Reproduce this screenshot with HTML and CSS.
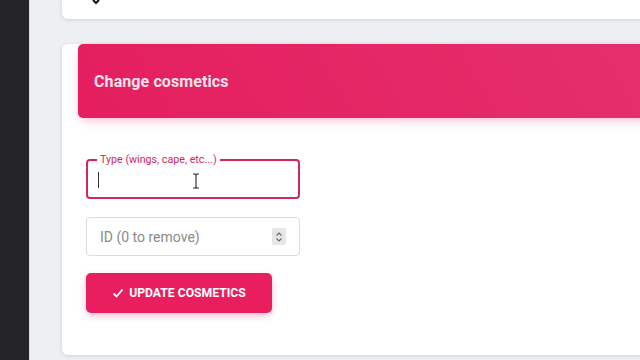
FILE: index.html
```html
<!DOCTYPE html>
<html lang="en">
<head>
  <meta charset="UTF-8">
  <title>Change cosmetics</title>
  <link rel="stylesheet" href="styles.css">
</head>
<body>
  <div class="layout">
    <aside class="sidebar"></aside>

    <main class="content">
      <div class="card card-top">
        <svg class="top-glyph" width="10" height="6" viewBox="0 0 10 6">
          <path d="M2 0 L5 3 L8 0" fill="none" stroke="#111" stroke-width="2"/>
        </svg>
      </div>

      <div class="card">
        <div class="card-header">
          <h4 class="card-title">Change cosmetics</h4>
        </div>

        <div class="card-body">
          <fieldset class="field field-active">
            <legend>Type (wings, cape, etc...)</legend>
            <div class="field-row">
              <span class="caret"></span>
              <svg class="ibeam" width="8" height="16" viewBox="0 0 8 16">
                <path d="M1 1 H3 Q4 1 4 2.5 V13.5 Q4 15 3 15 H1 M7 1 H5 Q4 1 4 2.5 M4 13.5 Q4 15 5 15 H7" fill="none" stroke="#222" stroke-width="1.1"/>
              </svg>
            </div>
          </fieldset>

          <div class="field field-number">
            <input type="text" placeholder="ID (0 to remove)">
            <span class="spinner">
              <svg width="8" height="12" viewBox="0 0 8 12">
                <path d="M1.5 4.5 L4 2 L6.5 4.5 M1.5 7.5 L4 10 L6.5 7.5" fill="none" stroke="#666" stroke-width="1.1"/>
              </svg>
            </span>
          </div>

          <button class="btn-update">
            <svg width="12" height="10" viewBox="0 0 12 10">
              <path d="M1.5 5.5 L4.5 8.5 L10.5 1.5" fill="none" stroke="#fff" stroke-width="1.8"/>
            </svg>
            UPDATE COSMETICS
          </button>
        </div>
      </div>
    </main>
  </div>
</body>
</html>
```

FILE: styles.css
```css
html, body { margin: 0; padding: 0; height: 100%; overflow: hidden; }
body { font-family: Roboto, "Noto Sans", Arial, sans-serif; background: #eeeff2; }

.layout { display: flex; height: 100%; }
.sidebar { width: 29px; flex: none; background: #252429; border-right: 1px solid #d9dadd; }

.content { flex: 1; padding-left: 32px; margin-right: -40px; }

.card { background: #fff; border-radius: 6px; box-shadow: 0 1px 4px rgba(0, 0, 0, 0.12); }
.card-top { height: 19px; border-radius: 0 0 6px 6px; margin-bottom: 51px; position: relative; }
.top-glyph { position: absolute; left: 29px; top: 0; }

.card-header {
  margin: -26px 0 0 16px;
  height: 74px;
  padding-left: 16px;
  display: flex;
  align-items: center;
  border-radius: 5px;
  background: linear-gradient(60deg, #e41e5f, #e5306d);
  box-shadow: 0 4px 12px -4px rgba(233, 30, 99, 0.45);
}
.card-title { margin: 0; font-size: 16px; font-weight: 700; color: #fbe3ec; letter-spacing: 0.1px; }

.card-body { padding: 42px 0 42px 24px; display: flex; flex-direction: column; align-items: flex-start; }

.field { width: 214px; box-sizing: border-box; border-radius: 4px; }
.field-active {
  margin: 0;
  padding: 0 10px;
  height: 44px;
  border: 2px solid #d3265f;
  margin-top: -5px;
}
.field-active legend {
  font-size: 10.7px;
  color: #d3265f;
  padding: 0 3px;
  margin-left: -1px;
  line-height: 10px;
}
.field-row { display: flex; align-items: center; height: 30px; position: relative; }
.caret { width: 1px; height: 16px; background: #333; }
.ibeam { position: absolute; left: 94px; top: 8px; }

.field-number {
  margin-top: 18px;
  height: 39px;
  border: 1px solid #dcdcdc;
  display: flex;
  align-items: center;
  padding: 0 13px 0 13px;
}
.field-number input {
  flex: 1;
  min-width: 0;
  border: none;
  outline: none;
  font-family: inherit;
  font-size: 14px;
  color: #333;
  background: transparent;
  padding: 0;
}
.field-number input::placeholder { color: #8a8a8a; }
.spinner {
  width: 14px; height: 17px;
  background: #e6e6e6;
  border-radius: 2px;
  display: flex; align-items: center; justify-content: center;
}

.btn-update {
  margin-top: 17px;
  width: 186px;
  height: 40px;
  border: none;
  border-radius: 5px;
  background: #e91e5f;
  color: #fff;
  font-family: inherit;
  font-size: 12.2px;
  font-weight: 700;
  display: flex;
  align-items: center;
  justify-content: center;
  gap: 5px;
  box-shadow: 0 3px 8px -2px rgba(233, 30, 99, 0.45);
}
```
